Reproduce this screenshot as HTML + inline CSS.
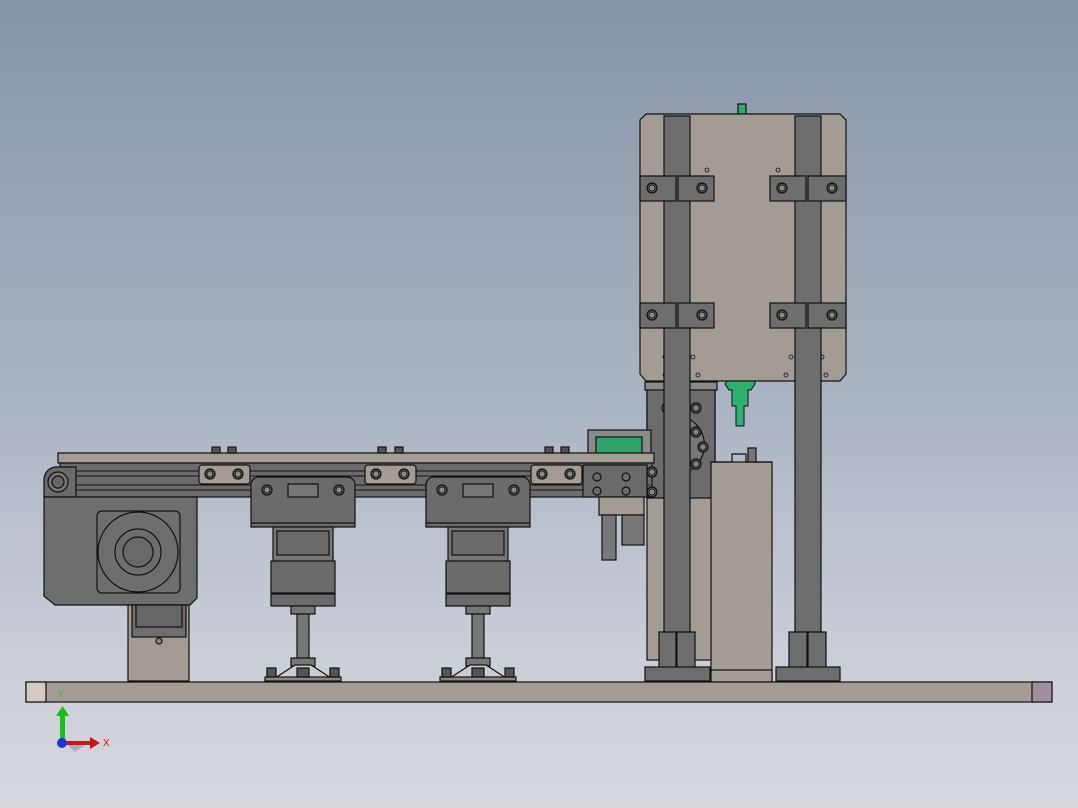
<!DOCTYPE html>
<html><head><style>
html,body{margin:0;padding:0;width:1078px;height:808px;overflow:hidden}
body{background:linear-gradient(#8795a9 0%,#a6b0c0 45%,#c9cdd6 80%,#d6d8de 100%)}
svg{position:absolute;left:0;top:0}
text{font-family:"Liberation Sans",sans-serif}
</style></head><body>
<svg width="1078" height="808" viewBox="0 0 1078 808" stroke="#111" stroke-width="1.2">
<defs>
<g id="bolt"><circle r="5" fill="#555"/><circle r="3" fill="#888" stroke-width="0.8"/></g>
</defs>
<!-- tower rear body -->
<rect x="647" y="388" width="68" height="272" fill="#a39c95"/>
<rect x="647" y="388" width="68" height="110" fill="#6c6c6c"/>
<rect x="645" y="382" width="72" height="8" fill="#8a8a8a"/>
<path d="M691 420 A30 30 0 0 1 691 470" fill="#777"/>
<use href="#bolt" x="696" y="432"/><use href="#bolt" x="703" y="447"/><use href="#bolt" x="696" y="464"/>
<use href="#bolt" x="667" y="408"/><use href="#bolt" x="696" y="408"/>
<!-- green nozzle -->
<rect x="738" y="104" width="8" height="12" fill="#2eaa6e"/>
<path d="M729 378 h26 v6 l-4 6 h-3 v16 h-4 v20 h-8 v-20 h-4 v-16 h-3 l-4 -6z" fill="#2eb071" stroke-width="1"/>
<!-- big panel -->
<path d="M646 114 H840 L846 120 V374 L840 381 H646 L640 374 V120 Z" fill="#a39c95"/>
<g fill="#999" stroke-width="0.8">
<circle cx="707" cy="170" r="2"/><circle cx="778" cy="170" r="2"/>
<circle cx="665" cy="375" r="2"/><circle cx="698" cy="375" r="2"/><circle cx="786" cy="375" r="2"/><circle cx="826" cy="375" r="2"/>
<circle cx="665" cy="357" r="2"/><circle cx="693" cy="357" r="2"/><circle cx="791" cy="357" r="2"/><circle cx="822" cy="357" r="2"/>
</g>
<!-- middle tall box -->
<rect x="711" y="462" width="61" height="218" fill="#a39c95"/>
<path d="M711 462 h21 v-8 h14 v8 h26" fill="none"/>
<rect x="748" y="448" width="8" height="14" fill="#777"/>
<rect x="711" y="670" width="61" height="12" fill="#a39c95"/>
<!-- columns -->
<rect x="664" y="116" width="26" height="520" fill="#6e6e6e"/>
<rect x="795" y="116" width="26" height="520" fill="#6e6e6e"/>
<!-- brackets -->
<g fill="#6e6e6e">
<rect x="640" y="176" width="36" height="25"/><rect x="678" y="176" width="36" height="25"/>
<rect x="770" y="176" width="36" height="25"/><rect x="808" y="176" width="38" height="25"/>
<rect x="640" y="303" width="36" height="25"/><rect x="678" y="303" width="36" height="25"/>
<rect x="770" y="303" width="36" height="25"/><rect x="808" y="303" width="38" height="25"/>
</g>
<g>
<use href="#bolt" x="652" y="188"/><use href="#bolt" x="702" y="188"/><use href="#bolt" x="782" y="188"/><use href="#bolt" x="832" y="188"/>
<use href="#bolt" x="652" y="315"/><use href="#bolt" x="702" y="315"/><use href="#bolt" x="782" y="315"/><use href="#bolt" x="832" y="315"/>
</g>
<!-- column feet -->
<g fill="#6e6e6e">
<rect x="659" y="632" width="17" height="36"/><rect x="677" y="632" width="18" height="36"/>
<rect x="789" y="632" width="18" height="36"/><rect x="808" y="632" width="18" height="36"/>
<rect x="645" y="667" width="65" height="14"/><rect x="776" y="667" width="64" height="14"/>
</g>
<!-- green slide block -->
<rect x="588" y="430" width="63" height="25" fill="#8a8a8a"/>
<rect x="596" y="437" width="46" height="18" fill="#2ea36b"/>
<!-- conveyor top rail -->
<rect x="58" y="453" width="596" height="10" fill="#a39c95"/>
<g fill="#555"><rect x="212" y="447" width="8" height="6"/><rect x="228" y="447" width="8" height="6"/><rect x="378" y="447" width="8" height="6"/><rect x="395" y="447" width="8" height="6"/><rect x="545" y="447" width="8" height="6"/><rect x="561" y="447" width="8" height="6"/></g>
<!-- belt profile -->
<rect x="60" y="463" width="592" height="34" fill="#6b6b6b"/>
<g fill="none" stroke-width="1"><line x1="76" y1="471" x2="650" y2="471"/><line x1="76" y1="476" x2="650" y2="476"/><line x1="76" y1="485" x2="650" y2="485"/><line x1="76" y1="490" x2="650" y2="490"/></g>
<g fill="#a39c95"><rect x="199" y="465" width="51" height="19" rx="3"/><rect x="365" y="465" width="51" height="19" rx="3"/><rect x="531" y="465" width="51" height="19" rx="3"/></g>
<g><use href="#bolt" x="210" y="474"/><use href="#bolt" x="238" y="474"/><use href="#bolt" x="376" y="474"/><use href="#bolt" x="404" y="474"/><use href="#bolt" x="542" y="474"/><use href="#bolt" x="570" y="474"/></g>
<rect x="583" y="465" width="64" height="32" fill="#6b6b6b"/>
<g fill="none"><circle cx="597" cy="477" r="4"/><circle cx="626" cy="477" r="4"/><circle cx="597" cy="491" r="4"/><circle cx="626" cy="491" r="4"/></g>
<use href="#bolt" x="652" y="472"/><use href="#bolt" x="652" y="492"/>
<rect x="599" y="497" width="45" height="18" fill="#a39c95"/>
<rect x="602" y="515" width="14" height="45" fill="#777"/>
<rect x="622" y="515" width="22" height="30" fill="#777"/>
<!-- left end -->
<path d="M55 467 H76 V497 H44 V480 A13 13 0 0 1 55 467Z" fill="#6b6b6b"/>
<circle cx="58" cy="482" r="10" fill="#777"/><circle cx="58" cy="482" r="6" fill="#666"/>
<!-- motor housing -->
<path d="M44 497 H197 V598 L190 605 H55 L44 596 Z" fill="#6e6e6e"/>
<rect x="97" y="511" width="83" height="82" rx="5" fill="#6e6e6e"/>
<circle cx="138" cy="552" r="40" fill="#6e6e6e"/>
<circle cx="138" cy="552" r="23" fill="#6e6e6e"/>
<circle cx="138" cy="552" r="15" fill="#6a6a6a"/>
<rect x="128" y="605" width="61" height="76" fill="#a39c95"/>
<rect x="132" y="605" width="54" height="32" fill="#6e6e6e"/>
<rect x="136" y="605" width="46" height="22" fill="#666"/>
<circle cx="159" cy="641" r="3" fill="#888"/>
<!-- stations -->
<g id="st">
<path d="M258 477 H347 A8 8 0 0 1 355 485 V527 H251 V485 A8 8 0 0 1 258 477Z" fill="#6b6b6b"/>
<line x1="251" y1="523" x2="355" y2="523"/>
<rect x="288" y="484" width="30" height="13" fill="#777"/>
<use href="#bolt" x="267" y="490"/><use href="#bolt" x="339" y="490"/>
<rect x="273" y="527" width="60" height="35" fill="#777"/>
<rect x="277" y="531" width="52" height="24" fill="#6b6b6b"/>
<rect x="271" y="561" width="64" height="32" fill="#6b6b6b"/>
<rect x="271" y="594" width="64" height="12" fill="#6b6b6b"/>
<rect x="291" y="606" width="24" height="8" fill="#777"/>
<rect x="297" y="614" width="12" height="46" fill="#777"/>
<rect x="291" y="658" width="24" height="8" fill="#777"/>
<path d="M275 678 L295 665 H311 L331 678Z" fill="#ccc"/>
<rect x="265" y="677" width="76" height="4" fill="#888"/>
<rect x="267" y="668" width="9" height="9" fill="#555"/><rect x="297" y="668" width="12" height="9" fill="#555"/><rect x="330" y="668" width="9" height="9" fill="#555"/>
</g>
<use href="#st" x="175"/>
<!-- base plate -->
<rect x="26" y="682" width="1026" height="20" fill="#a39c95"/>
<rect x="26" y="682" width="20" height="20" fill="#d4cac1"/>
<rect x="1032" y="682" width="20" height="20" fill="#a08f9a"/>
<!-- triad -->
<g stroke="none">
<path d="M62 740 L85 745 L75 752 Z" fill="#aab"/>
<rect x="60" y="714" width="5" height="28" fill="#16c016"/>
<path d="M56 716 L62.5 706 L69 716Z" fill="#16c016"/>
<rect x="62" y="741" width="30" height="4" fill="#d01515"/>
<path d="M90 737 L100 743 L90 749Z" fill="#d01515"/>
<circle cx="62" cy="743" r="5" fill="#1e32d6"/>
</g>
<text x="103" y="746" font-size="10" fill="#d01515" stroke="none">X</text>
<text x="58" y="697" font-size="9" fill="#16c016" stroke="none">Y</text>
</svg>
</body></html>
